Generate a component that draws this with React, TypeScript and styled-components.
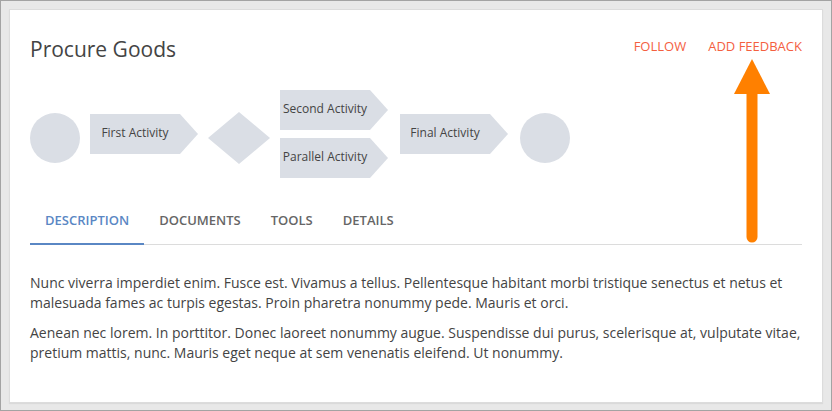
import React from "react";
import styled, { createGlobalStyle } from "styled-components";

const Global = createGlobalStyle`
  html, body { margin: 0; padding: 0; }
  body {
    background: #e6e6e6;
    font-family: "Open Sans", "Liberation Sans", sans-serif;
    color: #444;
  }
  * { box-sizing: border-box; }
`;

const Frame = styled.div`
  width: 832px;
  height: 411px;
  border: 1px solid #a3a3a3;
  background: #e8e8e8;
  padding: 8px 8px 7px 8px;
  position: relative;
`;

const Card = styled.div`
  background: #fff;
  border: 1px solid #dcdcdc;
  box-shadow: 0 1px 1px rgba(0, 0, 0, 0.06);
  height: 100%;
  padding: 24px 20px 20px 20px;
  display: flex;
  flex-direction: column;
`;

const Header = styled.div`
  display: flex;
  justify-content: space-between;
  align-items: flex-start;
`;

const Title = styled.h1`
  margin: 0;
  font-size: 21px;
  font-weight: 400;
  line-height: 30px;
  color: #444;
`;

const Links = styled.div`
  display: flex;
  gap: 22px;
  padding-top: 3px;
`;

const Link = styled.a`
  font-size: 13px;
  line-height: 18px;
  color: #f4603f;
  text-transform: uppercase;
  text-decoration: none;
  cursor: pointer;
`;

const Diagram = styled.div`
  display: flex;
  align-items: center;
  gap: 10px;
  margin-top: 26px;
`;

const Circle = styled.div<{ $ml?: number }>`
  width: 50px;
  height: 50px;
  border-radius: 50%;
  background: #dadee5;
  margin-top: 8px;
  margin-left: ${(p) => p.$ml ?? 0}px;
  flex: none;
`;

const Gateway = styled.svg`
  width: 62px;
  height: 52px;
  margin-top: 8px;
  flex: none;
`;

const Activity = styled.div`
  width: 108px;
  height: 40px;
  flex: none;
  background: #dadee5;
  clip-path: polygon(0 0, 90px 0, 108px 20px, 90px 40px, 0 40px);
  display: flex;
  align-items: center;
  padding-bottom: 4px;
`;

const ActivityLabel = styled.span`
  width: 90px;
  text-align: center;
  font-size: 12px;
  color: #444;
  white-space: nowrap;
`;

const Branch = styled.div`
  display: flex;
  flex-direction: column;
  gap: 8px;
  margin-right: 2px;
`;

const Tabs = styled.div`
  display: flex;
  margin-top: 22px;
  border-bottom: 1px solid #dcdcdc;
`;

const Tab = styled.div<{ $active?: boolean }>`
  padding: 0 15px 3px 15px;
  height: 45px;
  display: flex;
  align-items: center;
  font-size: 13px;
  font-weight: 600;
  text-transform: uppercase;
  color: ${(p) => (p.$active ? "#5a87c4" : "#666")};
  border-bottom: 2px solid ${(p) => (p.$active ? "#5a87c4" : "transparent")};
  margin-bottom: -1px;
`;

const Body = styled.div`
  padding-top: 28px;
`;

const Para = styled.p`
  margin: 0 0 11px 0;
  font-size: 14px;
  line-height: 19.5px;
  color: #444;
`;

const Arrow = styled.svg`
  position: absolute;
  left: 732px;
  top: 57px;
  width: 38px;
  height: 185px;
`;

export default function App() {
  return (
    <>
      <Global />
      <Frame>
        <Card>
          <Header>
            <Title>Procure Goods</Title>
            <Links>
              <Link>Follow</Link>
              <Link>Add Feedback</Link>
            </Links>
          </Header>
          <Diagram>
            <Circle />
            <Activity>
              <ActivityLabel>First Activity</ActivityLabel>
            </Activity>
            <Gateway viewBox="0 0 62 52">
              <polygon points="31,0 62,26 31,52 0,26" fill="#dadee5" />
            </Gateway>
            <Branch>
              <Activity>
                <ActivityLabel>Second Activity</ActivityLabel>
              </Activity>
              <Activity>
                <ActivityLabel>Parallel Activity</ActivityLabel>
              </Activity>
            </Branch>
            <Activity>
              <ActivityLabel>Final Activity</ActivityLabel>
            </Activity>
            <Circle $ml={2} />
          </Diagram>
          <Tabs>
            <Tab $active>Description</Tab>
            <Tab>Documents</Tab>
            <Tab>Tools</Tab>
            <Tab>Details</Tab>
          </Tabs>
          <Body>
            <Para>
              Nunc viverra imperdiet enim. Fusce est. Vivamus a tellus. Pellentesque habitant morbi tristique senectus et netus et
              malesuada fames ac turpis egestas. Proin pharetra nonummy pede. Mauris et orci.
            </Para>
            <Para>
              Aenean nec lorem. In porttitor. Donec laoreet nonummy augue. Suspendisse dui purus, scelerisque at, vulputate vitae,
              pretium mattis, nunc. Mauris eget neque at sem venenatis eleifend. Ut nonummy.
            </Para>
          </Body>
        </Card>
        <Arrow viewBox="0 0 38 185">
          <polygon points="19,1 37,36 1,36" fill="#ff8000" />
          <line x1="19" y1="30" x2="19" y2="179" stroke="#ff8000" strokeWidth="11" strokeLinecap="round" />
        </Arrow>
      </Frame>
    </>
  );
}
